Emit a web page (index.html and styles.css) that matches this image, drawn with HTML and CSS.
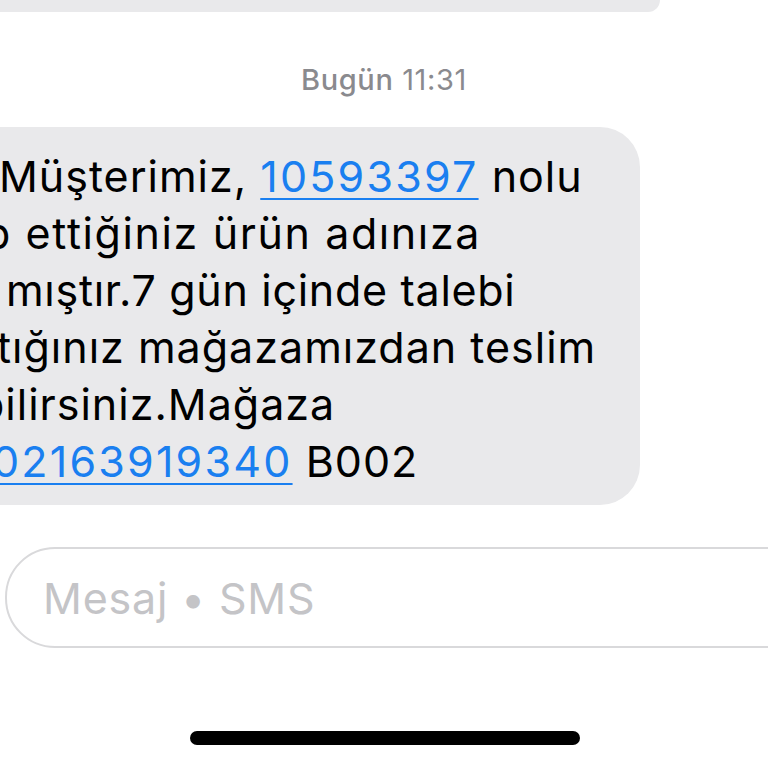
FILE: index.html
```html
<!DOCTYPE html>
<html>
<head>
  <meta name="viewport" content="width=device-width, initial-scale=1">
  <link rel="stylesheet" href="styles.css">
</head>
<body>

<div class="screen">
  <div class="prev-bubble"></div>

  <div class="stamp"><span class="stamp-day">Bugün</span> 11:31</div>

  <div class="bubble">
    <div class="line l1">Müşterimiz, <a class="link" href="#">10593397</a> nolu</div>
    <div class="line l2">p ettiğiniz ürün adınıza</div>
    <div class="line l3">mıştır.7 gün içinde talebi</div>
    <div class="line l4">tığınız mağazamızdan teslim</div>
    <div class="line l5">bilirsiniz.Mağaza</div>
    <div class="line l6"><a class="link" href="#">02163919340</a> B002</div>
  </div>

  <div class="composer">
    <span class="placeholder">Mesaj • SMS</span>
  </div>

  <div class="home-bar"></div>
</div>

</body>
</html>
```

FILE: styles.css
```css
body {
  margin: 0;
  background-color: #fff;
  font-family: Inter, "Noto Sans", sans-serif;
}

.screen {
  width: 768px;
  height: 768px;
  overflow: hidden;
  display: flex;
  flex-direction: column;
}

.prev-bubble {
  flex: none;
  width: 660px;
  height: 12px;
  background-color: #e9e9eb;
  border-bottom-right-radius: 30px;
}

.stamp {
  margin-top: 49px;
  text-align: center;
  font-size: 29px;
  line-height: 38px;
  letter-spacing: 0.6px;
  color: #8a8a8e;
}

.stamp-day {
  font-weight: 500;
}

.bubble {
  flex: none;
  margin-top: 28px;
  width: 640px;
  padding: 21px 0 15px;
  background-color: #e9e9eb;
  border-radius: 0 40px 40px 0;
  overflow: hidden;
  font-size: 43px;
  line-height: 57px;
  letter-spacing: 1px;
  color: #000;
}

.line {
  white-space: nowrap;
}

.l1 { margin-left: -1px; }
.l2 { margin-left: -16px; letter-spacing: 1.6px; }
.l3 { margin-left: 6px; letter-spacing: 0.7px; }
.l4 { margin-left: -3px; }
.l5 { margin-left: -22px; }
.l6 { margin-left: -8px; }

.link {
  color: #1a7ff0;
  letter-spacing: 2.2px;
  text-decoration: underline;
  text-decoration-thickness: 2px;
  text-underline-offset: 6px;
}

.composer {
  flex: none;
  margin-top: 42px;
  margin-left: 5px;
  width: 820px;
  height: 101px;
  border: 2px solid #d9d9db;
  border-radius: 50px;
  display: flex;
  align-items: center;
  padding-left: 36px;
  box-sizing: border-box;
}

.placeholder {
  font-size: 43px;
  letter-spacing: 0.8px;
  color: #c4c4c7;
}

.home-bar {
  flex: none;
  margin-top: 83px;
  margin-left: 190px;
  width: 390px;
  height: 14px;
  border-radius: 7px;
  background-color: #000;
}
```
